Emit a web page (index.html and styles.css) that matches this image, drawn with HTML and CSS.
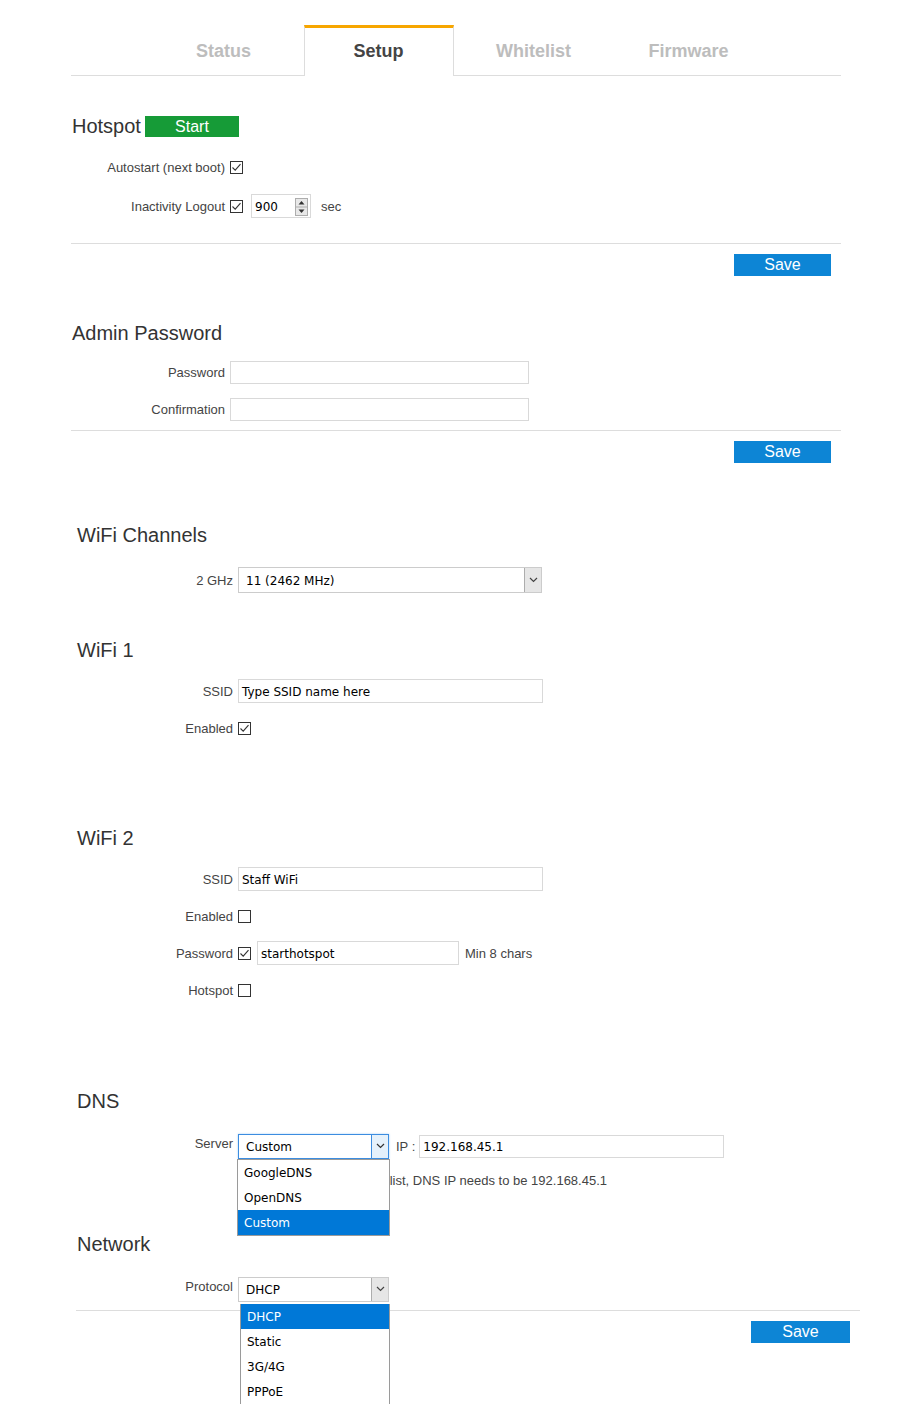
FILE: index.html
```html
<!DOCTYPE html>
<html lang="en">
<head>
  <meta charset="UTF-8">
  <meta name="viewport" content="width=device-width, initial-scale=1.0">
  <title>Hotspot Setup</title>
  <link rel="stylesheet" href="styles.css">
</head>
<body>
  <div class="top">
    <nav class="tabs">
      <a class="tab">Status</a>
      <a class="tab tab-active">Setup</a>
      <a class="tab">Whitelist</a>
      <a class="tab">Firmware</a>
    </nav>

    <section class="block block-hotspot">
      <h2 class="block-title">Hotspot <button class="btn btn-start">Start</button></h2>
      <div class="row row-first">
        <span class="label">Autostart (next boot)</span>
        <svg class="check" width="13" height="13" viewBox="0 0 13 13"><rect x="0.5" y="0.5" width="12" height="12" fill="#fff" stroke="#333"/><polyline points="2.5,6.5 5.2,9.2 10.5,3.2" fill="none" stroke="#333" stroke-width="1.1"/></svg>
      </div>
      <div class="row row-next">
        <span class="label">Inactivity Logout</span>
        <svg class="check" width="13" height="13" viewBox="0 0 13 13"><rect x="0.5" y="0.5" width="12" height="12" fill="#fff" stroke="#333"/><polyline points="2.5,6.5 5.2,9.2 10.5,3.2" fill="none" stroke="#333" stroke-width="1.1"/></svg>
        <div class="number">
          <span class="number-value">900</span>
          <svg class="spinner" width="13" height="18" viewBox="0 0 13 18">
            <rect x="0.5" y="0.5" width="12" height="17" fill="#e8e8e8" stroke="#adadad"/>
            <line x1="1" y1="9" x2="12" y2="9" stroke="#adadad"/>
            <polygon points="3.5,6.5 9.5,6.5 6.5,3" fill="#333"/>
            <polygon points="3.5,11.5 9.5,11.5 6.5,15" fill="#333"/>
          </svg>
        </div>
        <span class="unit">sec</span>
      </div>
    </section>
    <div class="save-bar"><button class="btn btn-save">Save</button></div>

    <section class="block block-admin">
      <h2 class="block-title">Admin Password</h2>
      <div class="row row-field row-first">
        <span class="label">Password</span>
        <div class="field field-admin"></div>
      </div>
      <div class="row row-field row-next">
        <span class="label">Confirmation</span>
        <div class="field field-admin"></div>
      </div>
    </section>
    <div class="save-bar"><button class="btn btn-save">Save</button></div>
  </div>

  <div class="bottom">
    <section class="block sec-channels">
      <h2 class="block-title">WiFi Channels</h2>
      <div class="row row-select">
        <span class="label">2 GHz</span>
        <div class="select select-wide">
          <span class="select-value">11 (2462 MHz)</span>
          <span class="select-arrow"><svg width="9" height="6" viewBox="0 0 9 6"><polyline points="1,1 4.5,4.5 8,1" fill="none" stroke="#444" stroke-width="1.2"/></svg></span>
        </div>
      </div>
    </section>

    <section class="block sec-wifi1">
      <h2 class="block-title">WiFi 1</h2>
      <div class="row">
        <span class="label">SSID</span>
        <div class="field field-wide">Type SSID name here</div>
      </div>
      <div class="row row-next">
        <span class="label">Enabled</span>
        <svg class="check" width="13" height="13" viewBox="0 0 13 13"><rect x="0.5" y="0.5" width="12" height="12" fill="#fff" stroke="#333"/><polyline points="2.5,6.5 5.2,9.2 10.5,3.2" fill="none" stroke="#333" stroke-width="1.1"/></svg>
      </div>
    </section>

    <section class="block sec-wifi2">
      <h2 class="block-title">WiFi 2</h2>
      <div class="row">
        <span class="label">SSID</span>
        <div class="field field-wide">Staff WiFi</div>
      </div>
      <div class="row row-next">
        <span class="label">Enabled</span>
        <svg class="check" width="13" height="13" viewBox="0 0 13 13"><rect x="0.5" y="0.5" width="12" height="12" fill="#fff" stroke="#333"/></svg>
      </div>
      <div class="row row-next">
        <span class="label">Password</span>
        <svg class="check" width="13" height="13" viewBox="0 0 13 13"><rect x="0.5" y="0.5" width="12" height="12" fill="#fff" stroke="#333"/><polyline points="2.5,6.5 5.2,9.2 10.5,3.2" fill="none" stroke="#333" stroke-width="1.1"/></svg>
        <div class="field field-pass">starthotspot</div>
        <span class="hint">Min 8 chars</span>
      </div>
      <div class="row row-next">
        <span class="label">Hotspot</span>
        <svg class="check" width="13" height="13" viewBox="0 0 13 13"><rect x="0.5" y="0.5" width="12" height="12" fill="#fff" stroke="#333"/></svg>
      </div>
    </section>

    <section class="block sec-dns">
      <h2 class="block-title">DNS</h2>
      <div class="row row-select">
        <span class="label label-top">Server</span>
        <div class="select select-short select-focus">
          <span class="select-value">Custom</span>
          <span class="select-arrow"><svg width="9" height="6" viewBox="0 0 9 6"><polyline points="1,1 4.5,4.5 8,1" fill="none" stroke="#333" stroke-width="1.2"/></svg></span>
          <ul class="dropdown dropdown-dns">
            <li class="dropdown-item">GoogleDNS</li>
            <li class="dropdown-item">OpenDNS</li>
            <li class="dropdown-item dropdown-item-active">Custom</li>
          </ul>
        </div>
        <span class="ip-label">IP :</span>
        <div class="field field-ip">192.168.45.1</div>
      </div>
      <p class="note">Before enabling the whitelist, DNS IP needs to be 192.168.45.1</p>
    </section>

    <section class="block sec-network">
      <h2 class="block-title">Network</h2>
      <div class="row row-select">
        <span class="label label-top">Protocol</span>
        <div class="select select-short">
          <span class="select-value">DHCP</span>
          <span class="select-arrow"><svg width="9" height="6" viewBox="0 0 9 6"><polyline points="1,1 4.5,4.5 8,1" fill="none" stroke="#444" stroke-width="1.2"/></svg></span>
          <ul class="dropdown dropdown-net">
            <li class="dropdown-item dropdown-item-active">DHCP</li>
            <li class="dropdown-item">Static</li>
            <li class="dropdown-item">3G/4G</li>
            <li class="dropdown-item">PPPoE</li>
          </ul>
        </div>
      </div>
    </section>
    <div class="save-bar save-bar-net"><button class="btn btn-save">Save</button></div>
  </div>
</body>
</html>
```

FILE: styles.css
```css
/* Setup page */
body {
  margin: 0;
  min-height: 1404px;
  font-family: "Liberation Sans", Arial, sans-serif;
  color: #444;
  background: #fff;
}
.top {
  width: 770px;
  margin-left: 71px;
  padding-top: 25px;
}
.bottom {
  width: 784px;
  margin-left: 76px;
  padding-bottom: 70px;
}

/* tabs */
.tabs {
  display: flex;
  justify-content: center;
  gap: 5px;
  height: 50px;
  border-bottom: 1px solid #ddd;
}
.tab {
  box-sizing: border-box;
  width: 150px;
  height: 50px;
  display: flex;
  align-items: center;
  justify-content: center;
  padding-bottom: 1px;
  font-size: 18px;
  font-weight: bold;
  color: #bdbdbd;
  border: 1px solid transparent;
  border-top: 3px solid transparent;
  border-bottom: none;
}
.tab-active {
  height: 51px;
  margin-bottom: -1px;
  padding-bottom: 2px;
  background: #fff;
  color: #444;
  border-color: #ddd;
  border-top-color: #f7a600;
}

/* sections */
.block-title {
  margin: 0;
  padding-left: 1px;
  height: 24px;
  display: flex;
  align-items: center;
  gap: 5px;
  font-size: 20px;
  font-weight: normal;
  color: #333;
}
.block-hotspot {
  padding-top: 40px;
  padding-bottom: 25px;
}
.block-hotspot .block-title {
  height: 21px;
  gap: 4px;
}
.block-admin {
  margin-top: 45px;
  padding-bottom: 9px;
}
.block-admin .row-first {
  margin-top: 16px;
}
.block-admin .row-next {
  margin-top: 14px;
}

.row {
  display: flex;
  align-items: center;
  gap: 5px;
  height: 24px;
  font-size: 13px;
}
.row-first {
  margin-top: 18px;
}
.row-next {
  margin-top: 15px;
}
.label {
  width: 154px;
  text-align: right;
  flex-shrink: 0;
}
.bottom .label {
  width: 157px;
}
.bottom .row-next {
  margin-top: 13px;
}
.label-top {
  align-self: flex-start;
  padding-top: 3px;
}
.check {
  flex-shrink: 0;
}

/* text fields */
.field {
  box-sizing: border-box;
  height: 24px;
  border: 1px solid #d9d9d9;
  display: flex;
  align-items: center;
  padding-left: 3px;
  padding-top: 1px;
  font-family: "DejaVu Sans", sans-serif;
  font-size: 12px;
  color: #000;
}
.row-field {
  height: 23px;
}
.field-admin {
  width: 299px;
  height: 23px;
}
.field-wide {
  width: 305px;
}
.field-pass {
  width: 202px;
  margin-left: 1px;
}
.field-ip {
  width: 305px;
  height: 23px;
  margin-left: -1px;
}
.hint {
  margin-left: 1px;
}
.ip-label {
  margin-left: 2px;
}

/* number input */
.number {
  box-sizing: border-box;
  width: 60px;
  height: 24px;
  margin-left: 3px;
  border: 1px solid #d9d9d9;
  display: flex;
  align-items: center;
  justify-content: space-between;
  padding: 1px 2px 0 3px;
  font-family: "DejaVu Sans", sans-serif;
  font-size: 12px;
  color: #000;
}
.unit {
  margin-left: 5px;
}

/* selects */
.row-select {
  height: 26px;
}
.select {
  position: relative;
  box-sizing: border-box;
  height: 26px;
  display: flex;
  border: 1px solid #ccc;
  background: #fff;
  font-family: "DejaVu Sans", sans-serif;
  font-size: 12px;
  color: #000;
}
.select-wide {
  width: 304px;
}
.select-short {
  width: 151px;
  height: 25px;
}
.select-value {
  flex: 1;
  display: flex;
  align-items: center;
  padding-left: 7px;
  padding-top: 1px;
}
.select-arrow {
  box-sizing: border-box;
  width: 17px;
  display: flex;
  align-items: center;
  justify-content: center;
  background: #e6e6e6;
  border-left: 1px solid #adadad;
}
.select-focus {
  border-color: #3c8de0;
  box-shadow: 0 0 2px #a9d0f5;
}
.select-focus .select-arrow {
  background: #e5f1fb;
  border-left-color: #3c8de0;
}

/* open option lists */
.dropdown {
  position: absolute;
  margin: 0;
  padding: 0;
  list-style: none;
  background: #fff;
  border: 1px solid #9a9a9a;
  z-index: 2;
}
.dropdown-dns {
  top: 24px;
  left: -2px;
  width: 151px;
}
.dropdown-net {
  top: 26px;
  left: 1px;
  width: 148px;
  border-top: none;
}
.dropdown-item {
  height: 25px;
  line-height: 26px;
  padding-left: 6px;
}
.dropdown-item-active {
  background: #0078d7;
  color: #fff;
}

.note {
  margin: 14px 0 0;
  padding-left: 167px;
  font-size: 13px;
  line-height: 16px;
}

.sec-channels {
  margin-top: 60px;
}
.sec-channels .row,
.sec-dns .row-select,
.sec-network .row-select {
  margin-top: 20px;
}
.sec-wifi1 {
  margin-top: 45px;
}
.sec-wifi1 > .row:nth-child(2),
.sec-wifi2 > .row:nth-child(2) {
  margin-top: 17px;
}
.sec-wifi2 {
  margin-top: 86px;
}
.sec-dns {
  margin-top: 87px;
}
.sec-network {
  margin-top: 43px;
  padding-bottom: 8px;
}

/* save bars */
.save-bar {
  border-top: 1px solid #ddd;
  display: flex;
  justify-content: flex-end;
  padding: 10px 10px 0 0;
}
.btn {
  border: none;
  color: #fff;
  font-family: "Liberation Sans", Arial, sans-serif;
  font-size: 16px;
  padding: 0;
  cursor: pointer;
}
.btn-start {
  width: 94px;
  height: 21px;
  background: #169b37;
}
.btn-save {
  width: 97px;
  height: 22px;
  background: #0d85d5;
}
.save-bar-net .btn-save {
  width: 99px;
}
```
